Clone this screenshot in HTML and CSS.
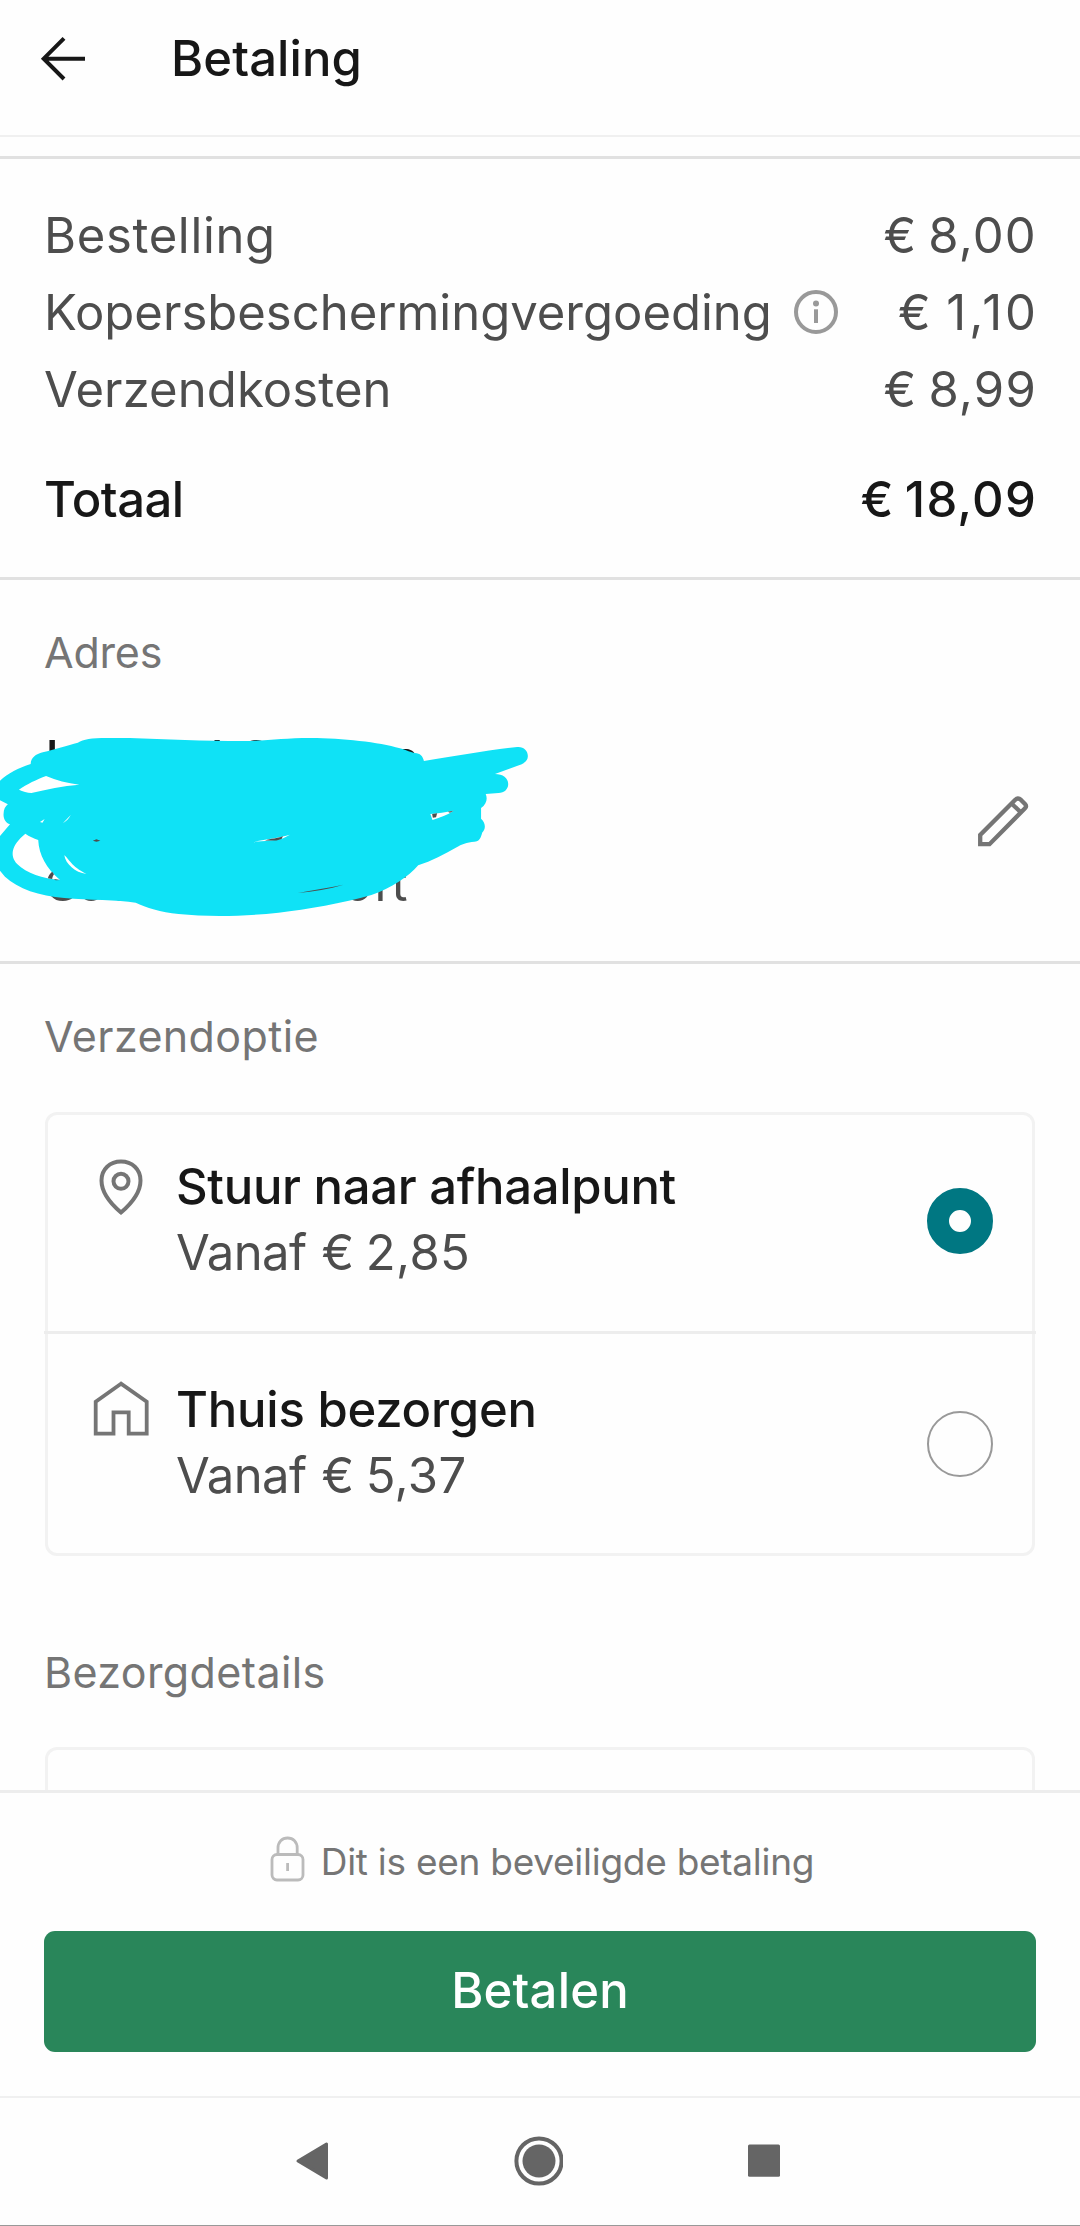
FILE: index.html
```html
<!DOCTYPE html>
<html lang="nl">
<head>
<meta charset="utf-8">
<title>Betaling</title>
<link rel="stylesheet" href="styles.css">
</head>
<body>
<div class="screen">
  <header class="topbar">
    <svg class="icon-back" width="46" height="46" viewBox="0 0 46 46"><path d="M45 22.7H4M24 2.3L3.7 22.7L24 43" fill="none" stroke="#171717" stroke-width="4"/></svg>
    <h1 class="title">Betaling</h1>
  </header>

  <main class="content">
    <section class="summary">
      <div class="row"><span class="ls-bestelling">Bestelling</span><span class="ls-amount">€ 8,00</span></div>
      <div class="row">
        <span class="fee">Kopersbeschermingvergoeding
          <svg class="icon-info" width="46" height="46" viewBox="0 0 46 46"><circle cx="23" cy="23" r="20" fill="none" stroke="#999" stroke-width="4"/><circle cx="23" cy="14.6" r="3" fill="#999"/><path d="M23 20.3V34" stroke="#999" stroke-width="4"/></svg>
        </span>
        <span class="ls-ones">€ 1,10</span>
      </div>
      <div class="row"><span class="ls-costs">Verzendkosten</span><span class="ls-amount">€ 8,99</span></div>
      <div class="row total"><span class="ls-total">Totaal</span><span class="ls-amount">€ 18,09</span></div>
    </section>

    <section class="address">
      <h2 class="label">Adres</h2>
      <div class="address-row">
        <svg class="scribble" width="560" height="240" viewBox="0 0 560 240">
          <g class="name"><text x="45.5" y="76">I</text><text x="193" y="76">d</text><text x="240" y="76">S</text><text x="391.500" y="75.500">a</text></g>
          <g class="city"><text x="44" y="201">G</text><text x="76.500" y="201">o</text><text x="107" y="201">o</text><text x="343" y="201">o</text><text x="374.500" y="201">r</text><text x="391.500" y="201">t</text></g>
          <g transform="scale(.35714 .33333)">
            <path fill="#0fe2f6" d="M86 192C86 174 100 162 120 157C152 148 190 136 218 128C234 118 255 114 300 114C400 112 520 122 640 123C740 125 780 114 870 114C960 115 1060 126 1120 145C1140 151 1150 158 1162 159C1176 160 1184 168 1187 183C1270 169 1370 149 1448 141C1466 139 1478 152 1478 168C1478 182 1468 190 1455 195L1386 222C1408 222 1423 234 1423 252C1423 268 1412 278 1396 279L1360 282C1366 297 1362 312 1347 324V356C1360 369 1361 386 1350 398C1347 412 1342 425 1328 425C1308 427 1290 434 1280 441C1245 463 1208 483 1171 496C1144 530 1096 565 1040 585C960 610 860 628 780 638C680 650 580 651 500 642C450 636 408 623 380 608C330 600 250 600 180 594C110 588 50 566 14 530L0 512V408L28 373C16 368 9 356 10 342C10 328 15 319 22 313L0 301V242C22 220 52 204 86 192Z"/>
            <g fill="#fff">
              <path d="M53 269C74 253 104 238 129 228C158 242 188 249 222 254C176 258 130 268 88 279C76 278 64 274 53 269Z"/>
              <path d="M71 401C82 409 94 415 107 420C109 465 130 505 168 540C120 536 74 520 48 492C27 467 31 436 71 401Z"/>
              <path d="M112 366L125 357L119 368ZM176 370L198 345C193 356 186 363 176 370Z"/>
              <path d="M180 466C191 474 200 500 242 522C210 518 184 492 180 466Z"/>
              <path d="M710 427C738 416 776 416 812 404L793 415C766 424 738 421 710 427Z"/>
              <path d="M1205 342C1226 341 1248 335 1270 332C1252 345 1234 352 1211 360Z"/>
            </g>
            <g fill="#4d4d4d">
              <path d="M260 422L270 418L281 422L270 425ZM742 422C758 414 778 417 792 408L789 416C774 424 758 421 742 422ZM1210 342L1224 340L1221 352L1212 353ZM1254 335L1270 332L1260 338Z"/>
              <path d="M134 535C136 526 141 519 146 515L151 523C148 528 147 532 146 537ZM150 537L168 540L156 541Z"/>
              <path d="M834 579C875 570 920 564 962 554C922 567 878 574 834 579Z"/>
            </g>
          </g>
        </svg>
        <svg class="icon-edit" width="52" height="52" viewBox="0 0 52 52"><g fill="none" stroke="#757575" stroke-width="4.300"><path d="M2.200 48.200V39L37 3.900Q40 1 43 3.900L47 8.100Q49 10.200 47 12.300L11.500 48.200Z"/><path d="M33.500 7.500L42.500 16"/></g></svg>
      </div>
    </section>

    <section class="shipping">
      <h2 class="label ls-wide">Verzendoptie</h2>
      <div class="options">
        <div class="option">
          <svg class="icon" width="60" height="60" viewBox="0 0 60 60"><g fill="none" stroke="#757575" stroke-width="4"><path d="M30 55.500C20 47 10.500 36 10.500 23.500C10.500 12 19 4.500 30 4.500S49.500 12 49.500 23.500C49.500 36 40 47 30 55.500Z"/><circle cx="30" cy="24.300" r="7.500"/></g></svg>
          <div class="option-text"><span class="name ls-pickup">Stuur naar afhaalpunt</span><span class="price"><span class="from">Vanaf</span>€ 2,85</span></div>
          <span class="radio radio-on"></span>
        </div>
        <div class="option">
          <svg class="icon" width="60" height="60" viewBox="0 0 60 60"><path d="M30 4.700L4.700 22.800V54.600H22.500V33.300H37.700V54.600H55.700V22.800Z" fill="none" stroke="#757575" stroke-width="3.800"/></svg>
          <div class="option-text"><span class="name ls-home">Thuis bezorgen</span><span class="price"><span class="from">Vanaf</span>€ 5,37</span></div>
          <span class="radio"></span>
        </div>
      </div>
    </section>

    <section class="delivery">
      <h2 class="label ls-wide">Bezorgdetails</h2>
      <div class="details"></div>
    </section>
  </main>

  <footer class="checkout">
    <p class="secure">
      <svg width="36" height="46" viewBox="0 0 36 46"><g fill="none" stroke="#bbb" stroke-width="2.800"><rect x="2" y="18.500" width="31" height="25.500" rx="5"/><path d="M8 18.500V12C8 6 12 2 17.600 2S27.200 6 27.200 12V18.500M17.600 27V35"/></g></svg>
      <span>Dit is een beveiligde betaling</span>
    </p>
    <button class="pay">Betalen</button>
  </footer>

  <nav class="navbar">
    <svg width="34" height="50" viewBox="0 0 34 50"><path d="M3 25L31.500 8V42Z" fill="#656565" stroke="#656565" stroke-width="3" stroke-linejoin="round"/></svg>
    <svg width="50" height="50" viewBox="0 0 50 50"><circle cx="26" cy="25" r="22.600" fill="none" stroke="#656565" stroke-width="4"/><circle cx="26" cy="25" r="16.500" fill="#656565"/></svg>
    <svg width="34" height="50" viewBox="0 0 34 50"><rect x="1" y="8.500" width="32" height="32.200" rx="1.500" fill="#656565"/></svg>
  </nav>
</div>
</body>
</html>
```
FILE: styles.css
```css
* { box-sizing: border-box; }

body {
  margin: 0;
  background: #fefefe;
  color: #4d4d4d;
  font-family: Inter, Roboto, sans-serif;
  font-size: 49px;
}

h1, h2, p { margin: 0; font-weight: 400; }
svg { display: block; flex: none; }

.screen {
  width: 1080px;
  height: 2226px;
  display: flex;
  flex-direction: column;
  overflow: hidden;
  border-bottom: 1px solid #999;
}

/* header */
.topbar {
  flex: none;
  height: 137px;
  display: flex;
  align-items: flex-start;
  gap: 85px;
  padding: 26px 0 0 40px;
  border-bottom: 2px solid #f0f0f0;
}
.icon-back { margin-top: 10px; }
.title {
  font-size: 49px;
  line-height: 66px;
  font-weight: 500;
  letter-spacing: .1px;
  color: #171717;
}

.content { flex: 1; min-height: 0; overflow: hidden; padding-top: 18.500px; }

/* order summary */
.summary {
  padding: 38px 44px 39px;
  border-top: 3px solid #e1e1e1;
  border-bottom: 3px solid #e1e1e1;
}
.row {
  display: flex;
  justify-content: space-between;
  line-height: 77px;
  white-space: nowrap;
}
.fee { display: flex; align-items: center; gap: 21px; }
.total { margin-top: 33px; font-weight: 500; color: #171717; }
.ls-bestelling { letter-spacing: .65px; }
.ls-costs { letter-spacing: .1px; }
.ls-amount { letter-spacing: 1.200px; word-spacing: -4px; margin-right: -1px; }
.ls-ones { letter-spacing: 3px; word-spacing: -4px; margin-right: -3px; }
.ls-total { letter-spacing: -.5px; }

/* address */
.address { padding: 39px 44px 0; height: 384.500px; border-bottom: 3px solid #e1e1e1; }
.label { font-size: 43px; line-height: 66px; color: #757575; letter-spacing: -.2px; }
.ls-wide { letter-spacing: .38px; }
.address-row { display: flex; justify-content: space-between; margin: 15px 6px 0 -44px; }
.icon-edit { margin-top: 96px; }
.scribble text { font-size: 49px; }
.scribble .name { font-weight: 500; fill: #171717; }
.scribble .city { fill: #4d4d4d; }

/* shipping options */
.shipping { padding: 39px 45px 0 44px; }
.options {
  margin: 43px 0 0 1px;
  border: 3px solid #f2f2f2;
  border-radius: 12px;
}
.option {
  display: flex;
  align-items: flex-start;
  height: 216px;
  padding: 39px 39px 0 43px;
}
.option + .option {
  height: 222px;
  margin: 0 -4px;
  padding: 43px 43px 0 47px;
  border-top: 3px solid #ededed;
}
.option .icon { margin: 2px 25px 0 0; }
.option:first-child .icon { margin-top: 3px; }
.option-text { flex: 1; display: flex; flex-direction: column; line-height: 66px; white-space: nowrap; }
.option .name { font-weight: 500; color: #171717; }
.ls-pickup { letter-spacing: -.3px; }
.ls-home { letter-spacing: -.22px; }
.price { letter-spacing: .4px; word-spacing: -3px; }
.from { margin-right: 15px; letter-spacing: -.6px; }
.radio {
  width: 66px;
  height: 66px;
  margin-top: 33.500px;
  border: 2px solid #999;
  border-radius: 50%;
}
.radio-on { border: 22px solid #007782; }

.delivery { padding: 83px 45px 0 44px; }
.details {
  margin: 42px 0 0 1px;
  height: 200px;
  border: 3px solid #f2f2f2;
  border-radius: 12px;
}

/* pay bar */
.checkout {
  flex: none;
  height: 306px;
  padding: 41px 44px 0;
  border-top: 3px solid #ededed;
}
.secure {
  display: flex;
  justify-content: center;
  align-items: flex-start;
  gap: 15px;
  padding-left: 4px;
  font-size: 37px;
  line-height: 56px;
  letter-spacing: -.27px;
  color: #757575;
}
.secure svg { margin-top: 2px; }
.pay {
  display: block;
  width: 992px;
  height: 121px;
  margin-top: 41px;
  padding: 0 0 2px;
  border: 0;
  border-radius: 11px;
  background: #29865a;
  color: #fff;
  font: 500 49px/119px Inter, Roboto, sans-serif;
  letter-spacing: .2px;
}

/* system navigation */
.navbar {
  flex: none;
  height: 129px;
  display: flex;
  justify-content: space-between;
  padding: 38px 299px 0 295px;
  border-top: 2px solid #f0f0f0;
}
```
